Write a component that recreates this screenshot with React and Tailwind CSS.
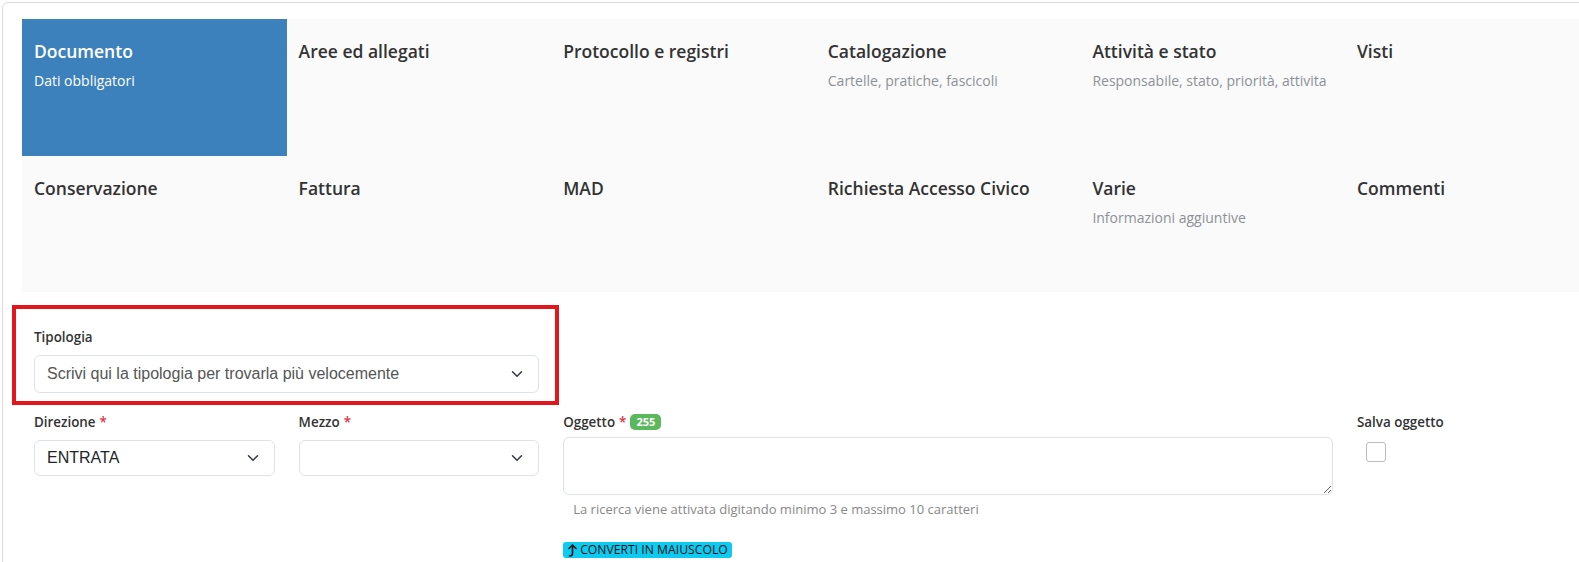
const tabs = [
  { title: 'Documento', sub: 'Dati obbligatori', active: true },
  { title: 'Aree ed allegati' },
  { title: 'Protocollo e registri' },
  { title: 'Catalogazione', sub: 'Cartelle, pratiche, fascicoli' },
  { title: 'Attività e stato', sub: 'Responsabile, stato, priorità, attivita' },
  { title: 'Visti' },
  { title: 'Conservazione' },
  { title: 'Fattura' },
  { title: 'MAD' },
  { title: 'Richiesta Accesso Civico' },
  { title: 'Varie', sub: 'Informazioni aggiuntive' },
  { title: 'Commenti' },
];

const sans = "font-['Open_Sans',sans-serif]";
const arial = "font-['Liberation_Sans',Arial,sans-serif]";

const Chevron = () => (
  <svg width="12" height="12" viewBox="0 0 16 16" fill="none" stroke="#343a40" strokeWidth="2" strokeLinecap="round" strokeLinejoin="round">
    <path d="M2 5l6 6 6-6" />
  </svg>
);

const Select = ({ value, placeholder, h = 'h-[36px]' }) => (
  <div className={`${h} w-full flex items-center justify-between pl-3 pr-[15px] border border-[#dee2e6] rounded-md bg-white ${arial} text-[16px]`}>
    {value ? (
      <span className="text-[#212529]">{value}</span>
    ) : (
      <span className="text-[#555]">{placeholder}</span>
    )}
    <Chevron />
  </div>
);

const Label = ({ children, required, badge }) => (
  <div className={`h-5 flex items-center gap-1 text-[13.4px] font-semibold text-[#333] ${sans}`}>
    {children}
    {required && <span className="text-[#dc3545]">*</span>}
    {badge && (
      <span className="h-4 px-[6px] flex items-center rounded-[5px] bg-[#5cb85c] text-white text-[11px] font-bold">
        {badge}
      </span>
    )}
  </div>
);

export default function App() {
  return (
    <div className="w-screen h-screen overflow-hidden bg-white">
      <div className="ml-[2px] mt-[2px] w-[1640px] h-[600px] border border-[#dcdde2] rounded-tl-md bg-white pt-4 pl-[19px]">
        {/* tabs */}
        <div className="grid grid-cols-[repeat(6,264.6px)] bg-[#fafafa]">
          {tabs.map((t) => (
            <div
              key={t.title}
              className={`h-[136.5px] px-3 pt-5 ${sans} ${t.active ? 'bg-[#3c81bc]' : ''}`}
            >
              <div className={`text-[17.5px] leading-6 font-semibold ${t.active ? 'text-white' : 'text-[#333]'}`}>
                {t.title}
              </div>
              {t.sub && (
                <div className={`mt-2 text-[14px] leading-5 ${t.active ? 'text-white' : 'text-[#8c9196]'}`}>
                  {t.sub}
                </div>
              )}
            </div>
          ))}
        </div>

        {/* tipologia */}
        <div className="mt-[13px] -ml-[10px] w-[547px] border-4 border-[#e3161e] pl-[18px] pr-4 pt-[18px] pb-2">
          <Label>Tipologia</Label>
          <div className="mt-2">
            <Select placeholder="Scrivi qui la tipologia per trovarla più velocemente" h="h-[38px]" />
          </div>
        </div>

        {/* campi */}
        <div className="mt-[7px] grid grid-cols-[repeat(6,264.6px)]">
          <div className="px-3">
            <Label required>Direzione</Label>
            <div className="mt-2">
              <Select value="ENTRATA" />
            </div>
          </div>
          <div className="px-3">
            <Label required>Mezzo</Label>
            <div className="mt-2">
              <Select />
            </div>
          </div>
          <div className="col-span-3 px-3">
            <Label required badge="255">
              Oggetto
            </Label>
            <textarea className="mt-[5px] block w-full h-[58px] border border-[#dee2e6] rounded-md bg-white" />
            <div className={`mt-[6px] pl-[10px] text-[13px] leading-[17px] text-[#888] ${sans}`}>
              La ricerca viene attivata digitando minimo 3 e massimo 10 caratteri
            </div>
            <div className="mt-6">
              <button className={`h-4 px-1 flex items-center gap-[3px] rounded-[3px] bg-[#0dcaf0] text-[12.2px] leading-4 text-[#111] ${sans}`}>
                <svg width="10" height="13" viewBox="0 0 10 13" fill="none" stroke="#111" strokeWidth="1.6" strokeLinecap="round" strokeLinejoin="round">
                  <path d="M2 4.5L5.5 1 9 4.5" />
                  <path d="M5.5 1.5V9.5Q5.5 12 2.5 12" />
                </svg>
                CONVERTI IN MAIUSCOLO
              </button>
            </div>
          </div>
          <div className="px-3">
            <Label>Salva oggetto</Label>
            <div className="mt-[10px] ml-[9px] w-5 h-5 border border-[#b8bcc0] rounded-[3px] bg-white" />
          </div>
        </div>
      </div>
    </div>
  );
}
